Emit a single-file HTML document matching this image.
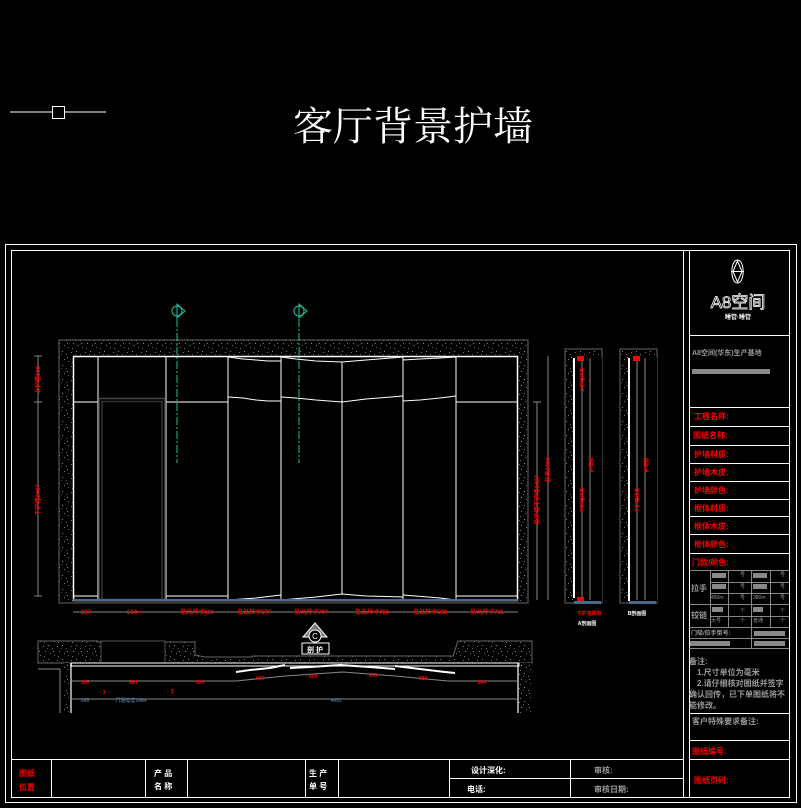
<!DOCTYPE html>
<html><head><meta charset="utf-8">
<style>
html,body{margin:0;padding:0;background:#000;}
svg{display:block;}
text{font-family:"Liberation Sans","Noto Sans CJK SC",sans-serif;}
</style></head><body>
<svg width="801" height="808" viewBox="0 0 801 808" xmlns="http://www.w3.org/2000/svg">
<defs>
<pattern id="h" width="14" height="14" patternUnits="userSpaceOnUse">
<rect width="14" height="14" fill="#000"/>
<rect x="1" y="2" width="1" height="1" fill="#777"/><rect x="6" y="1" width="1" height="1" fill="#888"/>
<rect x="10" y="4" width="1" height="1" fill="#666"/><rect x="3" y="7" width="1" height="1" fill="#888"/>
<rect x="8" y="9" width="1" height="1" fill="#777"/><rect x="12" y="11" width="1" height="1" fill="#666"/>
<rect x="2" y="12" width="1" height="1" fill="#777"/><rect x="5" y="4" width="1" height="1" fill="#555"/>
<rect x="11" y="7" width="1" height="1" fill="#888"/>
</pattern>
</defs>
<rect width="801" height="808" fill="#000"/>
<!-- top crosshair -->
<line x1="10" y1="112" x2="106" y2="112" stroke="#fff" stroke-width="1"/>
<rect x="52.5" y="106.5" width="12" height="12" fill="#000" stroke="#fff"/>
<text x="413" y="140" fill="#fff" font-size="40" text-anchor="middle" style="font-family:'Liberation Serif','Noto Serif CJK SC',serif">客厅背景护墙</text>

<!-- frames -->
<rect x="5.5" y="244.5" width="791" height="558" fill="none" stroke="#fff"/>
<rect x="11.5" y="250.5" width="778" height="547" fill="none" stroke="#fff"/>
<line x1="683.5" y1="250" x2="683.5" y2="797" stroke="#fff"/>
<line x1="689.5" y1="250" x2="689.5" y2="797" stroke="#fff"/>

<!-- elevation wall -->
<rect x="59" y="340" width="469" height="263" fill="url(#h)" stroke="#666"/>
<rect x="73" y="356" width="445" height="245" fill="#000"/>
<g stroke="#fff" stroke-width="1" fill="none">
<rect x="73.5" y="356.5" width="444" height="244" stroke-width="1.5"/>
<line x1="73" y1="402" x2="98" y2="402"/><line x1="166" y1="402" x2="228" y2="402"/><line x1="456" y1="402" x2="518" y2="402"/>
<polyline points="228,397 243,398 256,400 268,401 281,401"/>
<polyline points="281,397 296,398 316,400 342,402 366,399 391,397 403,396"/>
<polyline points="403,401 420,400 440,398 456,396"/>
<polyline points="228,357 243,359 256,360 268,361 281,361"/>
<polyline points="281,357 296,359 316,361 342,362 366,360 391,358 403,357"/>
<polyline points="403,360 420,359 440,358 456,357"/>
<line x1="73" y1="596" x2="98" y2="596"/><line x1="166" y1="596" x2="228" y2="596"/><line x1="456" y1="596" x2="518" y2="596"/>
<polyline points="228,600 256,598 281,595"/><polyline points="281,600 316,597 342,594 366,596 403,597"/><polyline points="403,595 440,598 456,600"/>
<line x1="98" y1="356" x2="98" y2="600"/><line x1="166" y1="356" x2="166" y2="600"/>
<line x1="228" y1="356" x2="228" y2="600"/><line x1="281" y1="356" x2="281" y2="600"/>
<line x1="342" y1="362" x2="342" y2="594"/><line x1="403" y1="356" x2="403" y2="600"/>
<line x1="456" y1="356" x2="456" y2="600"/>
</g>
<rect x="99" y="398.5" width="66" height="201" fill="#000" stroke="#444" stroke-width="1.5"/>
<rect x="102" y="401.5" width="60" height="198" fill="none" stroke="#333" stroke-width="1.5"/>
<line x1="73" y1="600" x2="518" y2="600" stroke="#4a6a8a" stroke-width="2"/>
<!-- markers -->
<g stroke="#1bc49a" fill="none">
<circle cx="177" cy="311" r="5"/><polygon points="177,304 185,311 177,318"/>
<line x1="177" y1="305" x2="177" y2="463" stroke-dasharray="8,2,2,2"/>
<circle cx="299" cy="311" r="5"/><polygon points="299,304 307,311 299,318"/>
<line x1="299" y1="305" x2="299" y2="463" stroke-dasharray="8,2,2,2"/>
</g>
<!-- dims -->
<g stroke="#888">
<line x1="73" y1="612" x2="518" y2="612"/>
<line x1="38" y1="356" x2="38" y2="596"/><line x1="34" y1="356" x2="42" y2="356"/><line x1="34" y1="402" x2="42" y2="402"/><line x1="34" y1="596" x2="42" y2="596"/>
<line x1="537" y1="402" x2="537" y2="600"/><line x1="533" y1="402" x2="541" y2="402"/>
<line x1="548" y1="356" x2="548" y2="600"/>
</g>
<g fill="#f00" font-size="6" font-weight="bold" text-anchor="middle">
<text x="86" y="614">327</text><text x="132" y="614">564</text><text x="197" y="614">见光尺寸610</text>
<text x="254" y="614">见光尺寸597</text><text x="311" y="614">见光尺寸707</text><text x="372" y="614">见光尺寸756</text>
<text x="430" y="614">见光尺寸588</text><text x="487" y="614">见光尺寸735</text>
<text transform="translate(40,380) rotate(-90)">上护墙500</text>
<text transform="translate(40,500) rotate(-90)">下护墙2407</text>
<text transform="translate(539,500) rotate(-90)">总护墙下护墙2407</text>
<text transform="translate(550,470) rotate(-90)">总高2900</text>
</g>

<!-- side sections -->
<rect x="565" y="349" width="37" height="254" fill="url(#h)" stroke="#666"/>
<rect x="573" y="357" width="29" height="245" fill="#000"/>
<line x1="574" y1="358" x2="574" y2="598" stroke="#fff" stroke-width="2"/>
<line x1="582" y1="358" x2="582" y2="600" stroke="#888"/><line x1="590" y1="358" x2="590" y2="600" stroke="#888"/>
<rect x="577" y="356" width="7" height="5" fill="#f00"/><rect x="577" y="597" width="7" height="5" fill="#f00"/>
<rect x="574" y="601" width="27" height="3" fill="#4a6a8a"/>
<rect x="620" y="349" width="37" height="254" fill="url(#h)" stroke="#666"/>
<rect x="628" y="357" width="29" height="245" fill="#000"/>
<line x1="629" y1="358" x2="629" y2="601" stroke="#fff" stroke-width="2"/>
<line x1="637" y1="358" x2="637" y2="600" stroke="#888"/><line x1="645" y1="358" x2="645" y2="600" stroke="#888"/>
<rect x="633" y="356" width="7" height="5" fill="#f00"/>
<rect x="629" y="601" width="27" height="3" fill="#4a6a8a"/>
<g fill="#f00" font-size="5" font-weight="bold" text-anchor="middle">
<text transform="translate(584,380) rotate(-90)">上护墙线条</text>
<text transform="translate(584,500) rotate(-90)">下护墙线条</text>
<text transform="translate(593,465) rotate(-90)">护墙板</text>
<text transform="translate(639,500) rotate(-90)">下护墙线条</text>
<text transform="translate(648,465) rotate(-90)">护墙板</text>
<text x="589" y="615">下护墙踢脚</text>
</g>
<text x="587" y="625" fill="#fff" font-size="5" text-anchor="middle" font-weight="bold">A剖面图</text>
<text x="637" y="615" fill="#fff" font-size="5" text-anchor="middle" font-weight="bold">B剖面图</text>

<!-- plan -->
<path d="M38,641 H98 V642 H195 V655 L205,657 H252 V656 H453 L458,641 H532 V663 H38 Z" fill="url(#h)" stroke="#666"/>
<rect x="101" y="641" width="64" height="22" fill="#000" stroke="#555"/>
<rect x="64" y="663" width="8" height="50" fill="url(#h)"/>
<rect x="518" y="663" width="14" height="50" fill="url(#h)"/>
<line x1="38" y1="669" x2="60" y2="669" stroke="#888"/><line x1="60" y1="669" x2="60" y2="713" stroke="#888"/>
<line x1="71" y1="663" x2="71" y2="713" stroke="#999" stroke-width="2"/>
<line x1="518" y1="663" x2="518" y2="713" stroke="#999" stroke-width="2"/>
<rect x="71" y="663" width="448" height="3" fill="none" stroke="#fff"/>
<g stroke="#fff" stroke-width="2" fill="none">
<polyline points="236,672 250,670 270,668 285,665"/><polyline points="290,668 310,667 340,665 370,667 395,669"/>
<polyline points="395,666 420,669 445,672 455,673"/>
</g>
<g stroke="#888" fill="none">
<line x1="71" y1="681" x2="236" y2="681"/><line x1="448" y1="681" x2="518" y2="681"/>
<polyline points="236,681 285,676 343,672 395,676 448,681"/>
<line x1="71" y1="699" x2="518" y2="699"/>
</g>
<g fill="#f00" font-size="5" font-weight="bold" text-anchor="middle">
<text x="85" y="684">305</text><text x="133" y="684">564</text><text x="200" y="684">904</text>
<text x="260" y="680">609</text><text x="313" y="678">609</text><text x="373" y="677">643</text><text x="423" y="680">580</text><text x="482" y="684">904</text>
<text x="104" y="694">3</text><text x="172" y="693">3</text>
</g>
<g fill="#4a6a8a" font-size="5" font-weight="bold" text-anchor="middle">
<text x="85" y="702">345</text><text x="131" y="702">门洞宽度1464</text><text x="336" y="702">4491</text>
</g>
<polygon points="315,623 303,637 327,637" fill="#777" stroke="#fff"/>
<circle cx="315" cy="636" r="6" fill="#000" stroke="#fff"/>
<text x="315" y="639" fill="#fff" font-size="8" text-anchor="middle">C</text>
<rect x="302" y="643" width="27" height="11" fill="#000" stroke="#fff"/>
<text x="315" y="652" fill="#fff" font-size="7" text-anchor="middle" font-weight="bold">剖 护</text>

<!-- bottom row -->
<g stroke="#fff">
<line x1="11" y1="759.5" x2="683" y2="759.5"/>
<line x1="449" y1="778.5" x2="683" y2="778.5"/>
<line x1="51.5" y1="759" x2="51.5" y2="797"/><line x1="145.5" y1="759" x2="145.5" y2="797"/>
<line x1="187.5" y1="759" x2="187.5" y2="797"/><line x1="305.5" y1="759" x2="305.5" y2="797"/>
<line x1="338.5" y1="759" x2="338.5" y2="797"/><line x1="449.5" y1="759" x2="449.5" y2="797"/>
<line x1="570.5" y1="759" x2="570.5" y2="797"/>
</g>
<g font-size="8" font-weight="bold">
<text x="19" y="776" fill="#f00">图纸</text><text x="19" y="790" fill="#f00">位置</text>
<text x="154" y="776" fill="#fff">产 品</text><text x="154" y="789" fill="#fff">名 称</text>
<text x="309" y="776" fill="#fff">生 产</text><text x="309" y="789" fill="#fff">单 号</text>
<text x="471" y="773" fill="#fff">设计深化:</text><text x="467" y="792" fill="#fff">电话:</text>
<text x="594" y="773" fill="#999">审核:</text><text x="594" y="792" fill="#999">审核日期:</text>
</g>

<!-- right column -->
<g stroke="#fff">
<line x1="689" y1="335.5" x2="789" y2="335.5"/>
<line x1="689" y1="407.5" x2="789" y2="407.5"/>
<line x1="689" y1="426.5" x2="789" y2="426.5"/><line x1="689" y1="445.5" x2="789" y2="445.5"/>
<line x1="689" y1="463.5" x2="789" y2="463.5"/><line x1="689" y1="481.5" x2="789" y2="481.5"/>
<line x1="689" y1="499.5" x2="789" y2="499.5"/><line x1="689" y1="516.5" x2="789" y2="516.5"/>
<line x1="689" y1="534.5" x2="789" y2="534.5"/><line x1="689" y1="553.5" x2="789" y2="553.5"/>
<line x1="689" y1="713.5" x2="789" y2="713.5"/><line x1="689" y1="740.5" x2="789" y2="740.5"/>
<line x1="689" y1="759.5" x2="789" y2="759.5"/>
</g>
<g stroke="#888">
<line x1="689" y1="570.5" x2="789" y2="570.5"/><line x1="710" y1="582.5" x2="789" y2="582.5"/>
<line x1="710" y1="593.5" x2="789" y2="593.5"/><line x1="689" y1="604.5" x2="789" y2="604.5"/>
<line x1="710" y1="616.5" x2="789" y2="616.5"/><line x1="689" y1="627.5" x2="789" y2="627.5"/>
<line x1="689" y1="638.5" x2="789" y2="638.5"/><line x1="689" y1="648.5" x2="789" y2="648.5"/>
<line x1="710.5" y1="570" x2="710.5" y2="627"/><line x1="728.5" y1="570" x2="728.5" y2="627"/>
<line x1="751.5" y1="570" x2="751.5" y2="648"/><line x1="770.5" y1="570" x2="770.5" y2="627"/>
</g>
<g fill="#888">
<rect x="712" y="573" width="14" height="5"/><rect x="753" y="573" width="14" height="5"/>
<rect x="712" y="584" width="14" height="5"/><rect x="753" y="584" width="14" height="5"/>
<rect x="712" y="607" width="11" height="5"/><rect x="753" y="607" width="10" height="5"/>
<rect x="754" y="631" width="31" height="5"/><rect x="690" y="641" width="40" height="5"/><rect x="754" y="641" width="31" height="5"/>
<rect x="692" y="369" width="78" height="5"/>
</g>
<g fill="#999" font-size="5">
<text x="740" y="599">号</text><text x="780" y="599">号</text>
<text x="711" y="599">450m</text><text x="753" y="599">380m</text>
<text x="711" y="622">大号</text><text x="753" y="622">普通</text>
<text x="780" y="576">号</text><text x="780" y="588">号</text><text x="740" y="576">号</text><text x="740" y="588">号</text>
<text x="740" y="612">个</text><text x="780" y="612">个</text><text x="740" y="622">个</text><text x="780" y="622">个</text>
</g>
<g font-size="8" font-weight="bold">
<text x="691" y="591" fill="#999">拉手</text><text x="691" y="618" fill="#999">铰链</text>
<text x="691" y="635" fill="#999" font-size="6">门吸/拉手型号:</text>
<text x="692" y="355" fill="#999" font-size="7">A8空间(华东)生产基地</text>
<text x="694" y="419" fill="#f00">工程名称:</text>
<text x="693" y="438" fill="#f00">图纸名称:</text>
<text x="694" y="457" fill="#f00">护墙材质:</text>
<text x="694" y="475" fill="#f00">护墙木皮:</text>
<text x="694" y="493" fill="#f00">护墙颜色:</text>
<text x="694" y="511" fill="#f00">框体材质:</text>
<text x="694" y="529" fill="#f00">框体木皮:</text>
<text x="694" y="547" fill="#f00">框体颜色:</text>
<text x="692" y="565" fill="#f00">门款/颜色:</text>
<text x="689" y="664" fill="#999">备注:</text>
<text x="697" y="675" fill="#999">1.尺寸单位为毫米</text>
<text x="697" y="686" fill="#999">2.请仔细核对图纸并签字</text>
<text x="689" y="697" fill="#999">确认回传，已下单图纸将不</text>
<text x="689" y="708" fill="#999">能修改。</text>
<text x="692" y="724" fill="#999">客户特殊要求备注:</text>
<text x="692" y="754" fill="#f00">图纸编号:</text>
<text x="694" y="783" fill="#f00">图纸页码:</text>
</g>
<!-- logo -->
<g stroke="#fff" fill="none" stroke-width="1">
<path d="M737.5,260 C730,260 730,283 737.5,283 C745,283 745,260 737.5,260 Z"/>
<path d="M737.5,261 L742,271.5 L737.5,282 L733,271.5 Z"/>
<line x1="731" y1="271.5" x2="744" y2="271.5"/>
</g>
<text x="738" y="308" fill="#000" stroke="#fff" stroke-width="0.8" font-size="17" text-anchor="middle">A8空间</text>
<text x="738" y="319" fill="#fff" font-size="6" text-anchor="middle" font-weight="bold">睡管·睡管</text>
</svg>
</body></html>
